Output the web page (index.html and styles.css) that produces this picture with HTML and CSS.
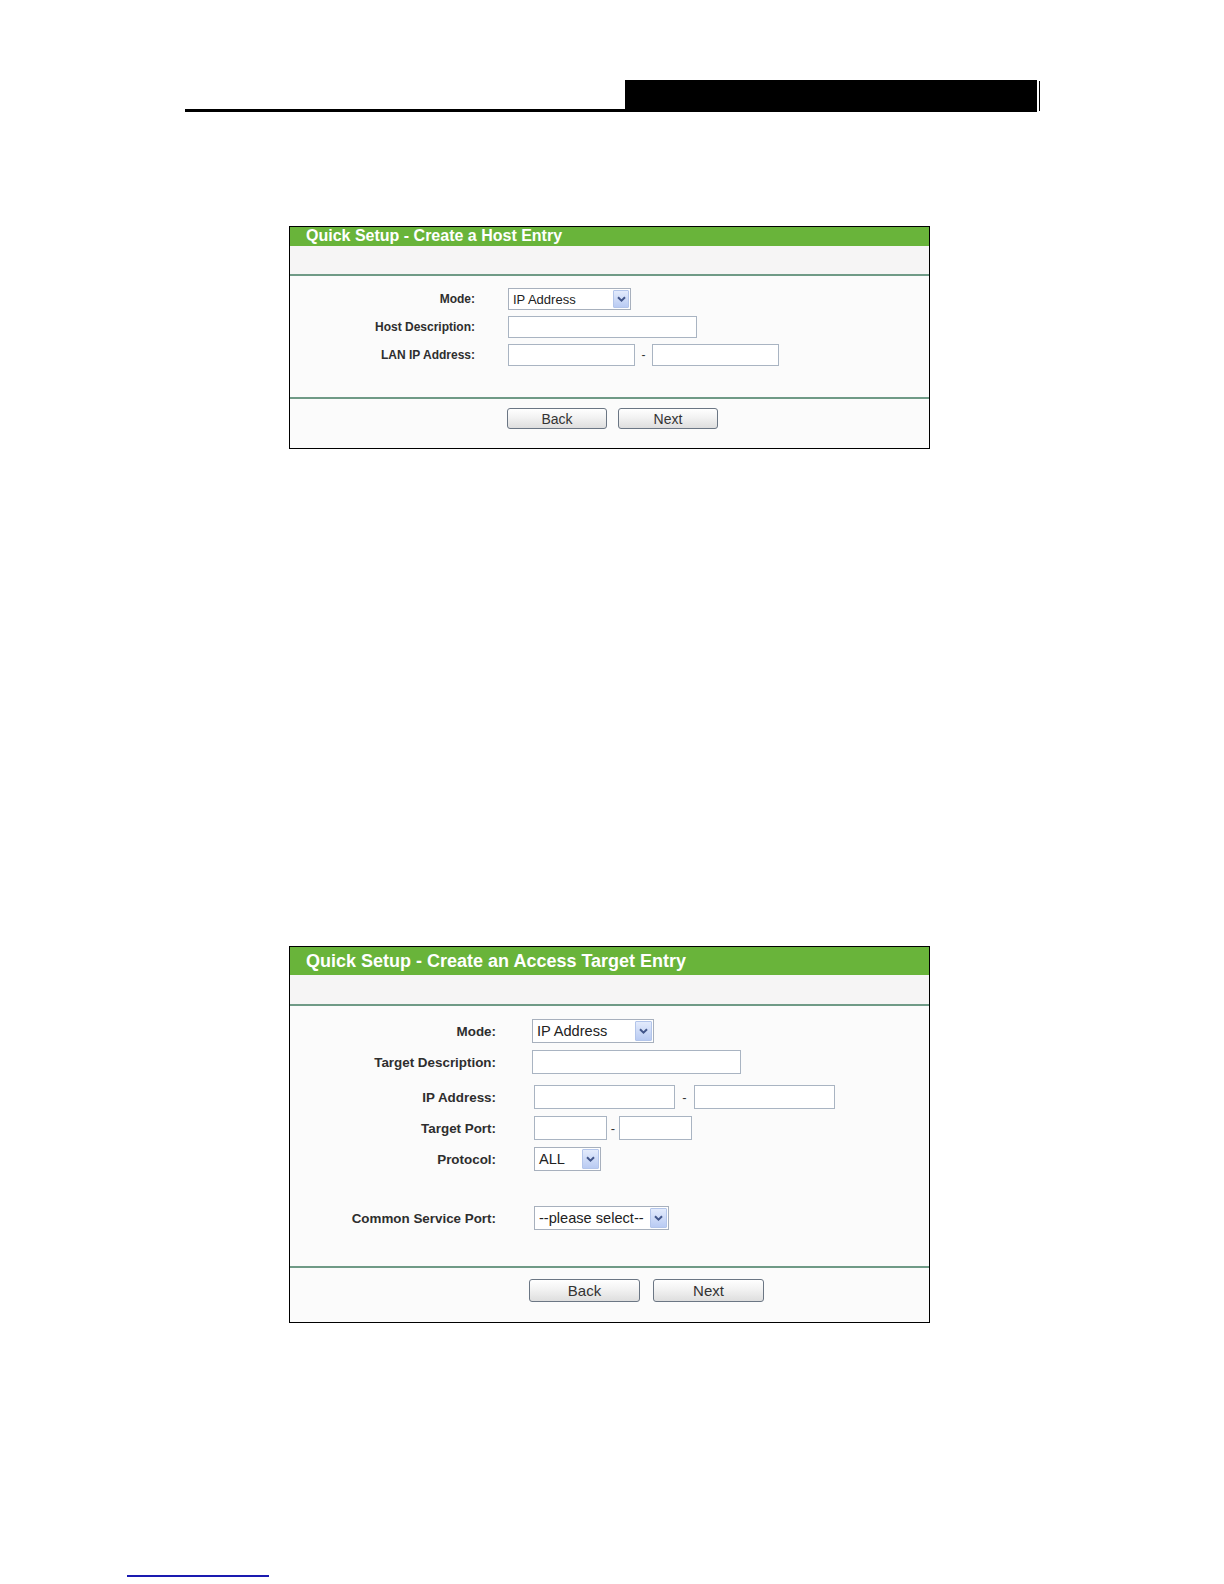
FILE: index.html
```html
<!DOCTYPE html>
<html lang="en">
<head>
  <meta charset="UTF-8">
  <meta name="viewport" content="width=device-width, initial-scale=1.0">
  <title>Quick Setup</title>
  <link rel="stylesheet" href="styles.css">
</head>
<body>
  <div class="page-head">
    <div class="head-rule"></div>
    <div class="head-tab"></div>
    <div class="head-edge"></div>
  </div>

  <div class="panel panel-host">
    <div class="panel-title">Quick Setup - Create a Host Entry</div>
    <div class="panel-sub"></div>
    <div class="panel-body">
      <label class="field-label">Mode:</label>
      <div class="field">
        <div class="select sel-mode"><span>IP Address</span><span class="arrow"><svg viewBox="0 0 9 6"><path d="M1 1.2 L4.5 4.6 L8 1.2" /></svg></span></div>
      </div>
      <label class="field-label">Host Description:</label>
      <div class="field"><input type="text" class="in-desc"></div>
      <label class="field-label">LAN IP Address:</label>
      <div class="field">
        <input type="text" class="in-ip">
        <span class="dash">-</span>
        <input type="text" class="in-ip">
      </div>
    </div>
    <div class="panel-foot">
      <button>Back</button>
      <button>Next</button>
    </div>
  </div>

  <div class="panel panel-target">
    <div class="panel-title">Quick Setup - Create an Access Target Entry</div>
    <div class="panel-sub"></div>
    <div class="panel-body">
      <label class="field-label">Mode:</label>
      <div class="field">
        <div class="select sel-mode"><span>IP Address</span><span class="arrow"><svg viewBox="0 0 9 6"><path d="M1 1.2 L4.5 4.6 L8 1.2" /></svg></span></div>
      </div>
      <label class="field-label">Target Description:</label>
      <div class="field"><input type="text" class="in-desc"></div>
      <label class="field-label row-gap">IP Address:</label>
      <div class="field shift row-gap">
        <input type="text" class="in-ip">
        <span class="dash">-</span>
        <input type="text" class="in-ip">
      </div>
      <label class="field-label">Target Port:</label>
      <div class="field shift">
        <input type="text" class="in-port">
        <span class="dash">-</span>
        <input type="text" class="in-port">
      </div>
      <label class="field-label">Protocol:</label>
      <div class="field shift">
        <div class="select sel-proto"><span>ALL</span><span class="arrow"><svg viewBox="0 0 9 6"><path d="M1 1.2 L4.5 4.6 L8 1.2" /></svg></span></div>
      </div>
      <label class="field-label row-gap-big">Common Service Port:</label>
      <div class="field shift row-gap-big">
        <div class="select sel-service"><span>--please select--</span><span class="arrow"><svg viewBox="0 0 9 6"><path d="M1 1.2 L4.5 4.6 L8 1.2" /></svg></span></div>
      </div>
    </div>
    <div class="panel-foot">
      <button>Back</button>
      <button>Next</button>
    </div>
  </div>

  <a class="foot-link" href="#"></a>
</body>
</html>
```

FILE: styles.css
```css
body {
  margin: 0;
  background: #fff;
  font-family: 'Liberation Sans', Arial, sans-serif;
  color: #333;
}

/* page header bar */
.page-head {
  display: flex;
  align-items: flex-end;
  margin-left: 185px;
  padding-top: 80px;
}
.head-rule {
  width: 440px;
  height: 3px;
  background: #000;
}
.head-tab {
  width: 412px;
  height: 32px;
  background: #000;
  margin-right: 2px;
}
.head-edge {
  align-self: flex-start;
  width: 1px;
  height: 30px;
  margin-top: 1px;
  background: #000;
}

/* panels */
.panel {
  width: 639px;
  margin-left: 289px;
  border: 1px solid #000;
  background: #fbfbfb;
}
.panel-host {
  margin-top: 114px;
}
.panel-target {
  margin-top: 497px;
}
.panel-title {
  background: #69b43a;
  color: #fff;
  font-weight: bold;
  padding-left: 16px;
}
.panel-sub {
  background: #f6f5f5;
  border-bottom: 2px solid #6f9a86;
}
.panel-body {
  display: grid;
  align-items: center;
}
.field-label {
  text-align: right;
  font-weight: bold;
  color: #2e2e2e;
}
.field {
  display: flex;
  align-items: center;
}
.panel-foot {
  display: flex;
  border-top: 2px solid #6f9a86;
}

input[type="text"] {
  box-sizing: border-box;
  margin: 0;
  border: 1px solid #a9b4c2;
  background: #fff;
  padding: 0;
}
.select {
  box-sizing: border-box;
  display: flex;
  align-items: center;
  justify-content: space-between;
  border: 1px solid #a7b0bd;
  background: #fff;
  color: #222;
  padding: 1px 1px 1px 4px;
}
.arrow {
  box-sizing: border-box;
  display: flex;
  align-items: center;
  justify-content: center;
  height: 100%;
  border: 1px solid #b3c5ea;
  border-radius: 1px;
  background: linear-gradient(#e3ebfc, #b9cbf3);
}
.arrow svg {
  width: 9px;
  height: 6px;
  fill: none;
  stroke: #42568a;
  stroke-width: 2;
}
.dash {
  color: #333;
  text-align: center;
}
button {
  box-sizing: border-box;
  margin: 0;
  padding: 0;
  border: 1px solid #6b7684;
  border-radius: 3px;
  background: linear-gradient(#ffffff, #f2f2f2 45%, #dedede);
  font-family: 'Liberation Sans', Arial, sans-serif;
  color: #333;
  cursor: pointer;
}

/* host entry panel */
.panel-host .panel-title {
  height: 19px;
  line-height: 18px;
  font-size: 16px;
}
.panel-host .panel-sub {
  height: 28px;
}
.panel-host .panel-body {
  grid-template-columns: 185px 1fr;
  column-gap: 33px;
  row-gap: 6px;
  padding: 12px 0 31px;
  height: 121px;
  box-sizing: border-box;
  align-content: start;
}
.panel-host .field-label {
  font-size: 12px;
}
.panel-host .field {
  height: 22px;
}
.panel-host .select {
  height: 22px;
  font-size: 13px;
}
.panel-host .arrow {
  width: 16px;
}
.panel-host .sel-mode {
  width: 123px;
}
.panel-host .in-desc {
  width: 189px;
  height: 22px;
}
.panel-host .in-ip {
  width: 127px;
  height: 22px;
}
.panel-host .dash {
  width: 17px;
  font-size: 12px;
}
.panel-host .panel-foot {
  gap: 11px;
  padding: 9px 0 19px 217px;
}
.panel-host button {
  width: 100px;
  height: 21px;
  font-size: 14px;
}

/* access target panel */
.panel-target .panel-title {
  height: 28px;
  line-height: 28px;
  font-size: 18px;
}
.panel-target .panel-sub {
  height: 29px;
}
.panel-target .panel-body {
  grid-template-columns: 206px 1fr;
  column-gap: 36px;
  row-gap: 7px;
  padding: 13px 0 36px;
  height: 260px;
  box-sizing: border-box;
  align-content: start;
}
.panel-target .field-label {
  font-size: 13.4px;
}
.panel-target .field {
  height: 24px;
}
.panel-target .shift {
  padding-left: 2px;
}
.panel-target .row-gap {
  margin-top: 4px;
}
.panel-target .row-gap-big {
  margin-top: 28px;
}
.panel-target .select {
  height: 24px;
  font-size: 14.6px;
}
.panel-target .arrow {
  width: 17px;
}
.panel-target .sel-mode {
  width: 122px;
}
.panel-target .sel-proto {
  width: 67px;
}
.panel-target .sel-service {
  width: 135px;
}
.panel-target .in-desc {
  width: 209px;
  height: 24px;
}
.panel-target .in-ip {
  width: 141px;
  height: 24px;
}
.panel-target .in-ip + .dash {
  width: 19px;
}
.panel-target .in-port {
  width: 73px;
  height: 24px;
}
.panel-target .in-port + .dash {
  width: 12px;
}
.panel-target .dash {
  font-size: 13px;
}
.panel-target .panel-foot {
  gap: 13px;
  padding: 11px 0 20px 239px;
}
.panel-target button {
  width: 111px;
  height: 23px;
  font-size: 15px;
}

.foot-link {
  display: block;
  width: 142px;
  height: 0;
  margin: 252px 0 0 127px;
  border-top: 2px solid #1a1ab0;
}
```
